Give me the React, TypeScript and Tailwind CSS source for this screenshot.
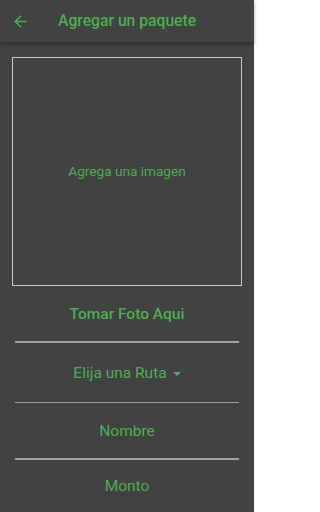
function BackArrow() {
  return (
    <svg viewBox="0 0 24 24" className="ml-[11px] h-[19px] w-[19px] fill-[#4caf50]">
      <path d="M20 11H7.83l5.59-5.59L12 4l-8 8 8 8 1.41-1.41L7.83 13H20v-2z" />
    </svg>
  );
}

function Row({ children, h, bold }: { children: React.ReactNode; h: string; bold?: boolean }) {
  return (
    <div className={`flex items-center justify-center text-[15.5px] text-[#4caf50] ${h} ${bold ? "font-medium" : ""}`}>
      {children}
    </div>
  );
}

function Divider() {
  return <div className="mx-[15px] h-[1.5px] bg-[#a0a0a0]" />;
}

export default function App() {
  return (
    <div className="min-h-[512px] w-[254px] bg-[#424242] font-['Roboto',sans-serif]">
      <header className="relative z-10 flex h-[42px] items-center bg-[#424242] shadow-[0_2px_4px_rgba(0,0,0,0.35)]">
        <BackArrow />
        <h1 className="ml-[28px] text-[15.7px] font-medium text-[#4caf50]">Agregar un paquete</h1>
      </header>

      <div className="px-[12px] pt-[15px]">
        <div className="flex h-[229px] items-center justify-center border border-[#c8c8c8] text-[13.6px] text-[#4caf50]">
          Agrega una imagen
        </div>
      </div>

      <Row h="h-[55px] pt-[3px]" bold>Tomar Foto Aqui</Row>
      <Divider />
      <Row h="h-[59px] pt-[3px]">
        Elija una Ruta
        <span className="ml-[6px] inline-block h-0 w-0 border-x-[4px] border-t-[4px] border-x-transparent border-t-[#4caf50]" />
      </Row>
      <Divider />
      <Row h="h-[55px] pt-[3px]">Nombre</Row>
      <Divider />
      <Row h="h-[55px] pt-[0px]">Monto</Row>
    </div>
  );
}
